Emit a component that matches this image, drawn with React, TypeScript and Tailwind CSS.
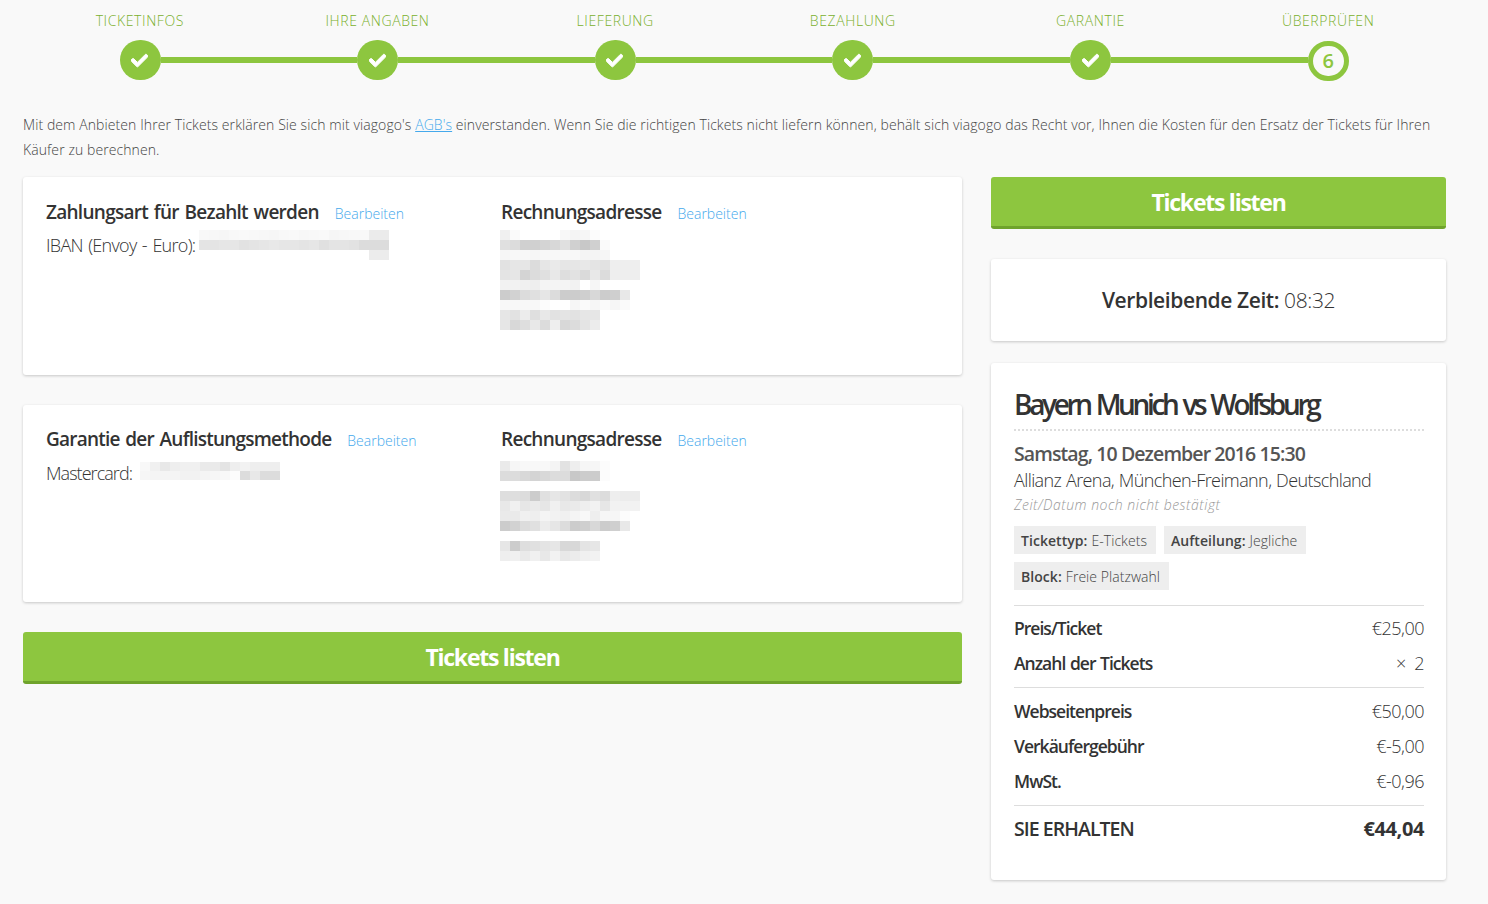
import { FaCheck } from "react-icons/fa";

const font = { fontFamily: '"Open Sans", "Noto Sans", sans-serif' };

const steps = ["TICKETINFOS", "IHRE ANGABEN", "LIEFERUNG", "BEZAHLUNG", "GARANTIE", "ÜBERPRÜFEN"];

// pixelated (redacted) bits of the screenshot, one string of greys per row, 10px blocks
const ibanBlur = [
  "f8f7f6f8f9f8f7f6f8f9f7f8f9f6f7f8f8ebeb".match(/../g)!,
  "e4e4e6e6e2e4e6e8e6e6e4e6e0e4e4e2dcdcdc".match(/../g)!,
  "ffffffffffffffffffffffffffffffffffecec".match(/../g)!,
];
const addrBlur1 = [
  "f0fafffffffff8f4f6fcff".match(/../g)!,
  "e0dcd0d0d4d8e0d0c8d0fa".match(/../g)!,
  "f6f8f8f6f8f8f8f8f4f4f6".match(/../g)!,
  "e2e6e6dce6eae6e6e8e4e2eeeeee".match(/../g)!,
  "e4e6d4dce0e8dee2dae8dceeeeee".match(/../g)!,
  "f2f2f0eef4f4f4f2fff6".match(/../g)!,
  "ccd2dce0e6dccccccfd8cccfe8".match(/../g)!,
  "f8f8f8f8fcfffff6faf6faf6fa".match(/../g)!,
  "e6e2ecdfe8e2e4e2e6e6".match(/../g)!,
  "e6d8dee8dceed8dce4ec".match(/../g)!,
];
const addrBlur2 = [
  "eaf6f8f8f8f4e2eef6f6fc".match(/../g)!,
  "dcdcd8d4d8dcdcc8ccccfc".match(/../g)!,
  "ffffffffffffffffffffff".match(/../g)!,
  "dededccce0e6e2dcd8e0dceeecec".match(/../g)!,
  "e8f0e6eae6f0e8eaeef2e6f2f2f2".match(/../g)!,
  "eaeaf0eef4f2f0f4f8eef6f6fc".match(/../g)!,
  "ccd2dce0ece6dccccfd8cccfe8".match(/../g)!,
  "ffffffffffffffffffffffff".match(/../g)!,
  "e6ccdee0e4e6d8d8e4e6".match(/../g)!,
  "eef0eaf0e8f2e8ecf0f2".match(/../g)!,
];
const cardBlur = [
  "f8f0e8eef0f0eaeae4eef2eeeeee".match(/../g)!,
  "f6f4f4f4f2f2f4f6f8fcdce8dcdc".match(/../g)!,
];

function Mosaic({ rows, rowH = 10 }: { rows: string[][]; rowH?: number }) {
  const w = Math.max(...rows.map((r) => r.length)) * 10;
  return (
    <svg width={w} height={rows.length * rowH} className="block shrink-0">
      {rows.map((r, y) =>
        r.map((g, x) => <rect key={`${x}-${y}`} x={x * 10} y={y * rowH} width="10" height={rowH} fill={`#${g}${g}${g}`} />)
      )}
    </svg>
  );
}

function CardHead({ title, tracking = "tracking-[-0.72px]" }: { title: string; tracking?: string }) {
  return (
    <div className="flex items-baseline gap-[16px]">
      <h2 className={`text-[19px] leading-[28px] font-semibold text-[#333] [word-spacing:1.5px] ${tracking}`}>{title}</h2>
      <a className="text-[14px] font-light text-[#45a9ec]">Bearbeiten</a>
    </div>
  );
}

function ListButton() {
  return (
    <button className="w-full h-[52px] pt-[2px] bg-[#8dc63f] border-b-[3px] border-[#6fa32c] rounded-[3px] text-white text-[23px] font-bold tracking-[-1.25px]">
      Tickets listen
    </button>
  );
}

function Row({ label, value }: { label: string; value: string }) {
  return (
    <div className="flex justify-between items-center h-[35px] pb-[2px]">
      <span className="text-[17.5px] font-semibold text-[#333] tracking-[-0.98px] [word-spacing:1px]">{label}</span>
      <span className="text-[18px] font-light text-[#333] tracking-[-0.5px]">{value}</span>
    </div>
  );
}

function Tag({ k, v }: { k: string; v: string }) {
  return (
    <span className="h-[28px] pl-[7px] pr-[9px] bg-[#eeeeee] flex items-center text-[14px] text-[#444] tracking-[0.05px]">
      <b className="font-semibold mr-[4px]">{k}</b>
      <span className="font-light">{v}</span>
    </span>
  );
}

export default function App() {
  return (
    <div className="w-[1488px] h-[904px] overflow-hidden bg-[#f9f9f9] text-[#333]" style={font}>
      {/* stepper */}
      <div className="grid grid-cols-6 w-[1426px] ml-[21px] pt-[11px] h-[29px] box-content">
        {steps.map((s) => (
          <div key={s} className="text-center text-[14px] leading-[20px] font-light text-[#7ab02c] tracking-[0.6px]">
            {s}
          </div>
        ))}
      </div>
      <div className="flex items-center ml-[119.7px] w-[1229px] h-[40px]">
        {steps.slice(0, 5).map((s) => (
          <div key={s} className="contents">
            <div className="w-[41px] h-[40px] rounded-full bg-[#8dc63f] flex items-center justify-center shrink-0">
              <FaCheck size={17} strokeWidth={30} className="text-white -ml-[1px]" />
            </div>
            <div className="flex-1 h-[6px] bg-[#8dc63f]" />
          </div>
        ))}
        <div className="w-[41px] h-[40px] translate-y-[1px] rounded-full border-[5px] border-[#8dc63f] flex items-center justify-center shrink-0 text-[#8dc63f] text-[20px] font-semibold">
          6
        </div>
      </div>

      <p className="ml-[23px] mt-[32px] w-[1420px] text-[14px] leading-[25px] font-light text-[#444] tracking-[0.085px]">
        Mit dem Anbieten Ihrer Tickets erklären Sie sich mit viagogo's{" "}
        <a className="text-[#45a9ec] underline">AGB's</a> einverstanden. Wenn Sie die richtigen Tickets nicht liefern
        können, behält sich viagogo das Recht vor, Ihnen die Kosten für den Ersatz der Tickets für Ihren Käufer zu
        berechnen.
      </p>

      <div className="flex gap-[29px] ml-[23px] mt-[15px] w-[1423px]">
        {/* left column */}
        <div className="w-[939px] flex flex-col gap-[30px]">
          <section className="h-[198px] bg-white rounded-[3px] shadow-[0_1px_3px_rgba(0,0,0,0.2)] grid grid-cols-[455px_1fr] pl-[23px] pt-[21px]">
            <div>
              <CardHead title="Zahlungsart für Bezahlt werden" />
              <div className="flex mt-[4px] text-[18px] leading-[30px] font-light text-[#333] tracking-[-0.72px] [word-spacing:1.5px]">
                IBAN (Envoy - Euro):
                <span className="ml-[4px]">
                  <Mosaic rows={ibanBlur} />
                </span>
              </div>
            </div>
            <div>
              <CardHead title="Rechnungsadresse" />
              <div className="-ml-[1px] mt-[4px]">
                <Mosaic rows={addrBlur1} />
              </div>
            </div>
          </section>
          <section className="h-[197px] bg-white rounded-[3px] shadow-[0_1px_3px_rgba(0,0,0,0.2)] grid grid-cols-[455px_1fr] pl-[23px] pt-[20px]">
            <div>
              <CardHead title="Garantie der Auflistungsmethode" tracking="tracking-[-0.78px]" />
              <div className="flex mt-[6px] text-[18px] leading-[28px] font-light text-[#333] tracking-[-0.95px]">
                Mastercard:
                <span className="ml-[8px] mt-[3px]">
                  <Mosaic rows={cardBlur} rowH={9} />
                </span>
              </div>
            </div>
            <div>
              <CardHead title="Rechnungsadresse" />
              <div className="-ml-[1px] mt-[8px]">
                <Mosaic rows={addrBlur2} />
              </div>
            </div>
          </section>
          <ListButton />
        </div>

        {/* right column */}
        <div className="w-[455px] flex flex-col">
          <ListButton />
          <div className="mt-[30px] h-[82px] pt-[2px] bg-white rounded-[3px] shadow-[0_1px_3px_rgba(0,0,0,0.2)] flex items-center justify-center text-[21px] tracking-[-0.4px]">
            <b className="font-semibold mr-[5px]">Verbleibende Zeit:</b>
            <span className="font-light">08:32</span>
          </div>
          <div className="mt-[22px] h-[517px] bg-white rounded-[3px] shadow-[0_1px_3px_rgba(0,0,0,0.2)] pl-[23px] pr-[22px] pt-[21px]">
            <h1 className="text-[28px] leading-[40px] font-semibold text-[#333] tracking-[-3.33px] [word-spacing:2px] pb-[5px] border-b-2 border-dotted border-[#dddddd] whitespace-nowrap">
              Bayern Munich vs Wolfsburg
            </h1>
            <div className="mt-[9px] text-[19.5px] leading-[27px] font-semibold text-[#555] tracking-[-0.9px]">
              Samstag, 10 Dezember 2016 15:30
            </div>
            <div className="text-[18px] leading-[26px] font-light text-[#333] tracking-[-0.6px] [word-spacing:0.6px]">
              Allianz Arena, München-Freimann, Deutschland
            </div>
            <div className="mt-[1px] text-[14px] leading-[22px] italic font-light text-[#999] tracking-[0.5px]">
              Zeit/Datum noch nicht bestätigt
            </div>
            <div className="mt-[10px] flex flex-wrap gap-x-[8px] gap-y-[8px]">
              <Tag k="Tickettyp:" v="E-Tickets" />
              <Tag k="Aufteilung:" v="Jegliche" />
              <Tag k="Block:" v="Freie Platzwahl" />
            </div>
            <div className="mt-[15px] border-t border-[#dddddd] pt-[6px] pb-[5px]">
              <Row label="Preis/Ticket" value="€25,00" />
              <Row label="Anzahl der Tickets" value={"×\u00a0\u00a02"} />
            </div>
            <div className="border-t border-[#dddddd] pt-[7px] pb-[5px]">
              <Row label="Webseitenpreis" value="€50,00" />
              <Row label="Verkäufergebühr" value="€-5,00" />
              <Row label="MwSt." value="€-0,96" />
            </div>
            <div className="border-t border-[#dddddd] flex justify-between items-center h-[48px] pb-[2px] font-semibold text-[#333]">
              <span className="text-[19.5px] tracking-[-0.95px]">SIE ERHALTEN</span>
              <span className="text-[20px] font-bold tracking-[-0.4px]">€44,04</span>
            </div>
          </div>
        </div>
      </div>
    </div>
  );
}
